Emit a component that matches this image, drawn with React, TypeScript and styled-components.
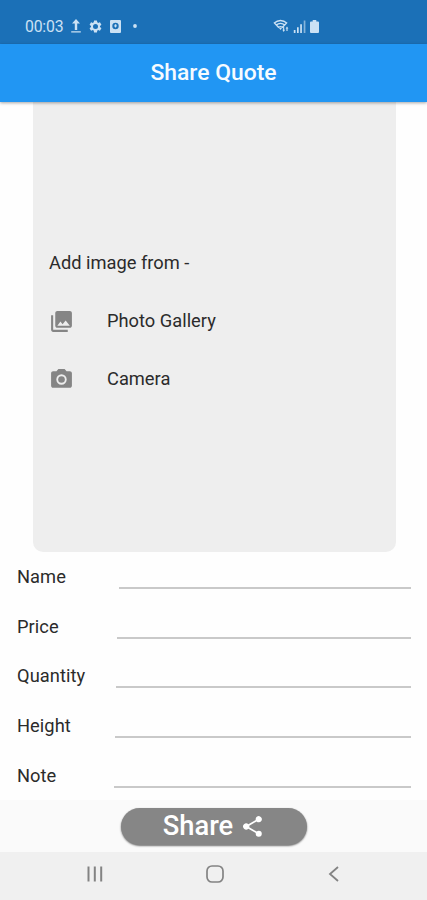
import React from "react";
import styled, { createGlobalStyle } from "styled-components";

const GlobalStyle = createGlobalStyle`
  * { box-sizing: border-box; }
  body { margin: 0; background: #fefefe; font-family: Roboto, sans-serif; }
`;

const Screen = styled.div`
  width: 427px;
  height: 900px;
  display: flex;
  flex-direction: column;
  overflow: hidden;
  background: #fefefe;
  color: #2b2b2b;
`;

const StatusBar = styled.header`
  height: 44px;
  flex: none;
  display: flex;
  padding: 9px 0 0 25px;
  background: #1b70b7;
  color: #cbe1f4;
`;

const StatusGroup = styled.div<{ $width: number }>`
  width: ${(p) => p.$width}px;
  height: 34px;
  display: flex;
  align-items: center;
`;

const Clock = styled.span`
  width: 44px;
  padding-top: 1px;
  font-size: 15.8px;
  letter-spacing: -0.2px;
`;

const AppBar = styled.div`
  height: 58px;
  flex: none;
  z-index: 1;
  display: flex;
  align-items: center;
  justify-content: center;
  background: #2196f3;
  box-shadow: 0 1px 3px rgba(0, 0, 0, 0.35);
`;

const Title = styled.h1`
  margin: 0;
  font-size: 22.9px;
  line-height: 30px;
  font-weight: 500;
  color: #f6fbff;
`;

const Content = styled.main`
  height: 698px;
  flex: none;
`;

const ImagePanel = styled.section`
  height: 450px;
  margin: 0 31.5px 0 33px;
  padding: 132px 16px 0;
  border-radius: 0 0 10px 10px;
  background: #eeeeee;
`;

const PanelRow = styled.div`
  height: 58px;
  display: flex;
  align-items: center;
  font-size: 18.3px;
`;

const RowText = styled.span`
  padding-bottom: 2px;
`;

const RowIcon = styled.span`
  width: 58px;
  height: 25px;
  display: flex;
  color: #858585;
`;

const Form = styled.form`
  display: flex;
  flex-direction: column;
`;

const Field = styled.label`
  height: 49.7px;
  padding: 0 16px 0 17px;
  display: flex;
  justify-content: space-between;
`;

const FieldName = styled.span`
  font-size: 18.3px;
  line-height: 50px;
  letter-spacing: 0.05px;
`;

const FieldInput = styled.input<{ $width: number }>`
  width: ${(p) => p.$width}px;
  height: 37px;
  padding: 0;
  border: 0;
  border-bottom: 2px solid #c9c9c9;
  outline: 0;
  background: transparent;
  font: 18px Roboto, sans-serif;
`;

const ActionBar = styled.div`
  height: 52px;
  flex: none;
  display: flex;
  justify-content: center;
  padding-top: 8px;
  background: #fafafa;
`;

const ShareButton = styled.button`
  width: 186px;
  height: 37px;
  display: flex;
  align-items: center;
  justify-content: center;
  gap: 7px;
  padding: 0 0 1px 1px;
  border: 0;
  border-radius: 19px;
  background: #868686;
  color: #fff;
  font: 500 27.3px/36px Roboto, sans-serif;
  box-shadow: 0 1px 2px rgba(0, 0, 0, 0.55);
`;

const NavBar = styled.nav`
  height: 48px;
  flex: none;
  display: flex;
  align-items: center;
  justify-content: space-between;
  padding: 0 81px 4px 83px;
  background: #f0f0f0;
  color: #838383;
`;

const Svg = styled.svg<{ $w: number; $h?: number; $ml?: number }>`
  width: ${(p) => p.$w}px;
  height: ${(p) => p.$h ?? p.$w}px;
  margin-left: ${(p) => p.$ml ?? 0}px;
  flex: none;
  display: block;
  fill: currentColor;
`;

const fields = [
  { name: "Name", width: 292 },
  { name: "Price", width: 294 },
  { name: "Quantity", width: 295 },
  { name: "Height", width: 296 },
  { name: "Note", width: 297 },
];

export default function App() {
  return (
    <>
      <GlobalStyle />
      <Screen>
        <StatusBar>
          <StatusGroup $width={248}>
            <Clock>00:03</Clock>
            <Svg $w={14} viewBox="0 0 14 14">
              <path d="M7 0 11 4.5H8.2V11H5.8V4.5H3zM2.2 12.3h9.6v1.3H2.2z" />
            </Svg>
            <Svg $w={15} $ml={5} viewBox="0 0 24 24">
              <path d="M19.14 12.94c.04-.3.06-.61.06-.94 0-.32-.02-.64-.07-.94l2.03-1.58a.49.49 0 0 0 .12-.61l-1.92-3.32a.49.49 0 0 0-.59-.22l-2.39.96c-.5-.38-1.03-.7-1.62-.94l-.36-2.54a.48.48 0 0 0-.48-.41h-3.84c-.24 0-.43.17-.47.41l-.36 2.54c-.59.24-1.13.57-1.62.94l-2.39-.96c-.22-.08-.47 0-.59.22L2.74 8.87c-.12.21-.08.47.12.61l2.03 1.58c-.05.3-.09.63-.09.94s.02.64.07.94l-2.03 1.58a.49.49 0 0 0-.12.61l1.92 3.32c.12.22.37.29.59.22l2.39-.96c.5.38 1.03.7 1.62.94l.36 2.54c.05.24.24.41.48.41h3.84c.24 0 .44-.17.47-.41l.36-2.54c.59-.24 1.13-.56 1.62-.94l2.39.96c.22.08.47 0 .59-.22l1.92-3.32a.48.48 0 0 0-.12-.61zM12 16a4 4 0 1 1 0-8 4 4 0 0 1 0 8z" />
            </Svg>
            <Svg $w={11} $h={13} $ml={7} viewBox="0 0 11 13">
              <path fillRule="evenodd" d="M1 0h9a1 1 0 0 1 1 1v11a1 1 0 0 1-1 1H1a1 1 0 0 1-1-1V1a1 1 0 0 1 1-1zM5.5 2.8a3.2 3.2 0 1 0 0 6.4 3.2 3.2 0 0 0 0-6.4zM4.8 4.2h1.5v1.4h.9L5.5 7.8 3.8 5.6h1z" />
            </Svg>
            <Svg $w={4} $ml={12} viewBox="0 0 4 4">
              <circle cx="2" cy="2" r="1.9" />
            </Svg>
          </StatusGroup>
          <StatusGroup $width={60}>
            <Svg $w={18} $h={14} viewBox="0 0 18 14">
              <path
                d="M.8 4.2Q7.5-1.2 14.2 4.2M3 6.3Q7.5 2.6 12 6.3M1.5 4 5.5 8.3Q7.5 6.8 9.5 8.3L13.5 4"
                fill="none"
                stroke="currentColor"
                strokeWidth="1.3"
              />
              <path d="M5.8 8.8h3.4L7.5 11zM11.2 8v5h-1.1V8zM14.6 8v4h-1.2V8zM9.3 10.8h2.8l-1.4 2.2zM12.6 9.5 14 7.5l1.4 2z" />
            </Svg>
            <Svg $w={14} $h={13} $ml={2} viewBox="0 0 14 13">
              <path d="M.8 10h1.7v3H.8zM4 7.3h1.7V13H4zM7.2 4.3h1.7V13H7.2z" />
              <path d="M10.7.5h1.7V13h-1.7z" opacity=".6" />
            </Svg>
            <Svg $w={9} $h={13} $ml={3} viewBox="0 0 9 13">
              <path d="M2.7 0h3.6v1.6H8a1 1 0 0 1 1 1V12a1 1 0 0 1-1 1H1a1 1 0 0 1-1-1V2.6a1 1 0 0 1 1-1h1.7z" />
            </Svg>
          </StatusGroup>
        </StatusBar>
        <AppBar>
          <Title>Share Quote</Title>
        </AppBar>
        <Content>
          <ImagePanel>
            <PanelRow>
              <RowText>Add image from -</RowText>
            </PanelRow>
            <PanelRow>
              <RowIcon>
                <Svg $w={25} viewBox="0 0 24 24">
                  <path d="M22 16V4c0-1.1-.9-2-2-2H8c-1.1 0-2 .9-2 2v12c0 1.1.9 2 2 2h12c1.1 0 2-.9 2-2zm-11-4 2.03 2.71L16 11l4 5H8zM2 6v14c0 1.1.9 2 2 2h14v-2H4V6z" />
                </Svg>
              </RowIcon>
              <RowText>Photo Gallery</RowText>
            </PanelRow>
            <PanelRow>
              <RowIcon>
                <Svg $w={25} viewBox="0 0 24 24">
                  <circle cx="12" cy="12" r="3.2" />
                  <path d="M9 2 7.17 4H4c-1.1 0-2 .9-2 2v12c0 1.1.9 2 2 2h16c1.1 0 2-.9 2-2V6c0-1.1-.9-2-2-2h-3.17L15 2zm3 15a5 5 0 1 1 0-10 5 5 0 0 1 0 10z" />
                </Svg>
              </RowIcon>
              <RowText>Camera</RowText>
            </PanelRow>
          </ImagePanel>
          <Form>
            {fields.map((f) => (
              <Field key={f.name}>
                <FieldName>{f.name}</FieldName>
                <FieldInput $width={f.width} aria-label={f.name} />
              </Field>
            ))}
          </Form>
        </Content>
        <ActionBar>
          <ShareButton type="button">
            Share
            <Svg $w={25} viewBox="0 0 24 24">
              <path d="M18 16.08c-.76 0-1.44.3-1.96.77L8.91 12.7c.05-.23.09-.46.09-.7s-.04-.47-.09-.7l7.05-4.11A3 3 0 1 0 15 5c0 .24.04.47.09.7L8.04 9.81A3 3 0 1 0 8.04 14.19l7.12 4.16c-.05.21-.08.43-.08.65a2.92 2.92 0 1 0 2.92-2.92z" />
            </Svg>
          </ShareButton>
        </ActionBar>
        <NavBar>
          <Svg $w={24} viewBox="0 0 24 24">
            <path d="M4.5 4.5h2v15h-2zM10.8 4.5h2v15h-2zM17.2 4.5h2v15h-2z" />
          </Svg>
          <Svg $w={24} viewBox="0 0 24 24">
            <rect x="4" y="4" width="16" height="16" rx="5" fill="none" stroke="currentColor" strokeWidth="1.7" />
          </Svg>
          <Svg $w={24} viewBox="0 0 24 24">
            <path d="m16 5-8 7 8 7" fill="none" stroke="currentColor" strokeWidth="1.8" />
          </Svg>
        </NavBar>
      </Screen>
    </>
  );
}
